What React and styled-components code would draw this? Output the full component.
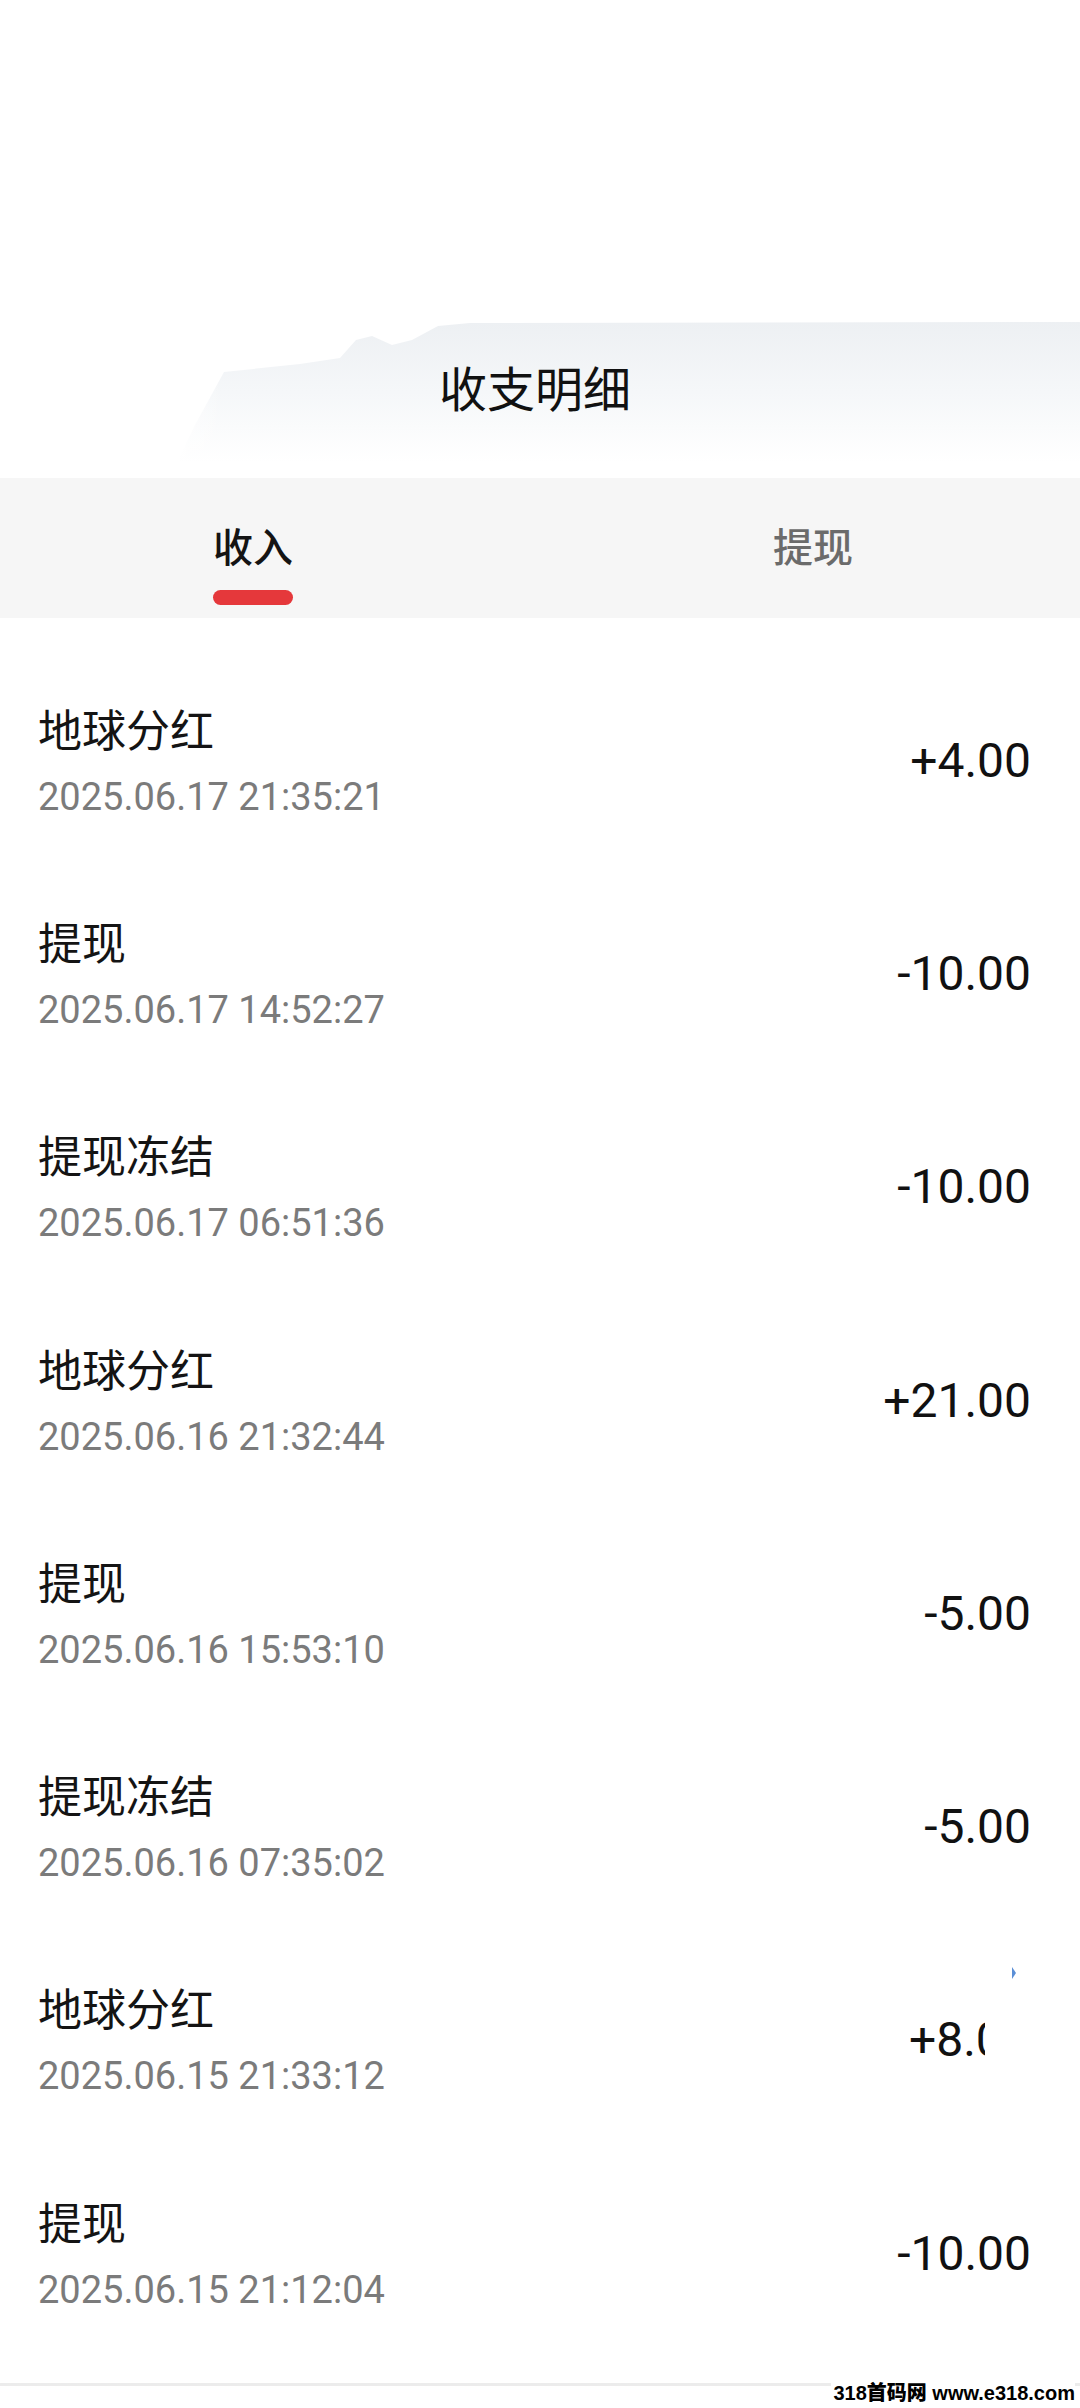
import React from 'react';
import styled, { createGlobalStyle } from 'styled-components';

const GlobalStyle = createGlobalStyle`
  html, body {
    margin: 0;
    padding: 0;
    background: #ffffff;
  }
  body {
    font-family: Roboto, "Noto Sans CJK SC", "Noto Sans", sans-serif;
    color: #141414;
  }
`;

const Page = styled.div`
  width: 1080px;
  min-height: 2408px;
  display: flex;
  flex-direction: column;
  background: #fff;
  overflow: hidden;
`;

const Header = styled.header`
  position: relative;
  height: 478px;
  display: flex;
  flex-direction: column;
  justify-content: flex-end;
  align-items: center;
  padding-bottom: 62px;
  box-sizing: border-box;
  svg {
    position: absolute;
    inset: 0;
    width: 100%;
    height: 100%;
  }
`;

const Title = styled.h1`
  position: relative;
  margin: 0;
  font-family: "Noto Sans CJK SC", sans-serif;
  font-size: 48px;
  line-height: 60px;
  font-weight: 400;
  color: #111;
  padding-right: 10px;
`;

const TabBar = styled.nav`
  height: 140px;
  background: #f6f6f6;
  display: flex;
  justify-content: space-between;
  align-items: flex-start;
  padding: 42px 227px 0 213px;
  box-sizing: border-box;
`;

const Tab = styled.div`
  display: flex;
  flex-direction: column;
  align-items: center;
  gap: 20px;
  font-family: "Noto Sans CJK SC", sans-serif;
  font-size: 40px;
  line-height: 50px;
  font-weight: 500;
  color: ${p => (p.$active ? '#141414' : '#6b6b6b')};
  &::after {
    content: '';
    width: 80px;
    height: 15px;
    border-radius: 8px;
    background: ${p => (p.$active ? '#e5383b' : 'transparent')};
  }
`;

const List = styled.ul`
  list-style: none;
  margin: 0;
  padding: 36px 0 0;
`;

const Row = styled.li`
  position: relative;
  height: 213.3px;
  display: flex;
  align-items: center;
  justify-content: space-between;
  padding: 0 49px 0 38px;
  box-sizing: border-box;
`;

const Info = styled.div`
  display: flex;
  flex-direction: column;
  gap: 22px;
`;

const Name = styled.span`
  font-family: "Noto Sans CJK SC", sans-serif;
  font-size: 44px;
  line-height: 50px;
  color: #141414;
`;

const Time = styled.span`
  font-family: Roboto, sans-serif;
  font-size: 38px;
  line-height: 44px;
  color: #7b7b7b;
`;

const AmountBox = styled.div`
  width: ${p => (p.$cut ? '122px' : 'auto')};
`;

const Amount = styled.span`
  display: block;
  font-family: Roboto, sans-serif;
  font-size: 48px;
  line-height: 56px;
  color: #111;
  white-space: nowrap;
  overflow: hidden;
  width: ${p => (p.$cut ? `${p.$cut}px` : 'auto')};
`;

const Speck = styled.i`
  position: absolute;
  right: 64px;
  top: 33px;
  width: 0;
  height: 0;
  border-top: 6px solid transparent;
  border-bottom: 6px solid transparent;
  border-left: 4px solid #5b8fd6;
`;

const Footer = styled.footer`
  position: relative;
  margin-top: 23px;
  height: 25px;
  border-top: 3px solid #ececec;
`;

const Watermark = styled.span`
  position: absolute;
  right: 5px;
  top: -3px;
  padding-left: 2px;
  background: #fff;
  font-family: "Liberation Sans", "Noto Sans CJK SC", sans-serif;
  font-size: 20px;
  line-height: 20px;
  font-weight: 900;
  color: #000;
`;

const records = [
  { name: '地球分红', time: '2025.06.17 21:35:21', amount: '+4.00' },
  { name: '提现', time: '2025.06.17 14:52:27', amount: '-10.00' },
  { name: '提现冻结', time: '2025.06.17 06:51:36', amount: '-10.00' },
  { name: '地球分红', time: '2025.06.16 21:32:44', amount: '+21.00' },
  { name: '提现', time: '2025.06.16 15:53:10', amount: '-5.00' },
  { name: '提现冻结', time: '2025.06.16 07:35:02', amount: '-5.00' },
  { name: '地球分红', time: '2025.06.15 21:33:12', amount: '+8.00', cut: 76, speck: true },
  { name: '提现', time: '2025.06.15 21:12:04', amount: '-10.00' },
];

const Hills = () => (
  <svg viewBox="0 0 1080 478" preserveAspectRatio="none" aria-hidden="true">
    <defs>
      <linearGradient id="hillFade" x1="0" y1="0" x2="0" y2="1">
        <stop offset="0" stopColor="#edf0f3" />
        <stop offset="0.45" stopColor="#f5f7f9" />
        <stop offset="0.9" stopColor="#ffffff" />
      </linearGradient>
      <linearGradient id="hillSide" x1="0" y1="0" x2="1" y2="0">
        <stop offset="0" stopColor="#ffffff" stopOpacity="1" />
        <stop offset="0.12" stopColor="#ffffff" stopOpacity="0" />
      </linearGradient>
    </defs>
    <path
      d="M170 478 L195 425 L224 372 L300 364 L340 358 L356 340 L372 336 L392 345 L412 340 L438 326 L470 323 L1080 322 L1080 478 Z"
      fill="url(#hillFade)"
    />
    <rect x="150" y="322" width="600" height="156" fill="url(#hillSide)" />
  </svg>
);

const App = () => (
  <Page>
    <GlobalStyle />
    <Header>
      <Hills />
      <Title>收支明细</Title>
    </Header>
    <TabBar>
      <Tab $active>收入</Tab>
      <Tab>提现</Tab>
    </TabBar>
    <List>
      {records.map((r, i) => (
        <Row key={i}>
          <Info>
            <Name>{r.name}</Name>
            <Time>{r.time}</Time>
          </Info>
          <AmountBox $cut={r.cut}>
            <Amount $cut={r.cut}>{r.amount}</Amount>
          </AmountBox>
          {r.speck && <Speck />}
        </Row>
      ))}
    </List>
    <Footer>
      <Watermark>318首码网 www.e318.com</Watermark>
    </Footer>
  </Page>
);

export default App;
